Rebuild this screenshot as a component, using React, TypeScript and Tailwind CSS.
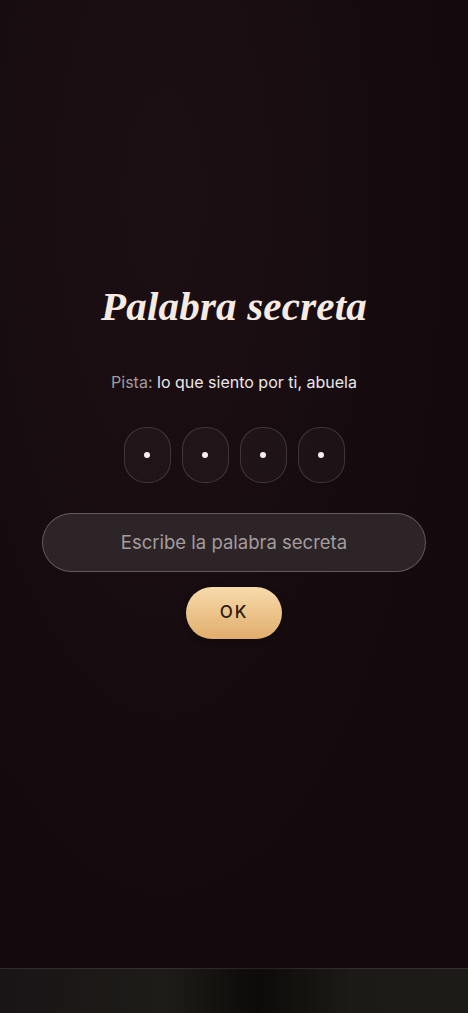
import React from 'react';

const PinBox: React.FC = () => (
  <div className="w-[47px] h-[56px] rounded-[22px] border border-white/15 bg-white/[0.03] flex items-center justify-center">
    <span className="w-[6px] h-[6px] rounded-full bg-[#f4eef0]" />
  </div>
);

export default function App() {
  return (
    <div className="w-[468px] h-[1013px] flex flex-col bg-[#140a0e] font-['Inter','Noto_Sans',sans-serif] overflow-hidden">
      <div className="flex-1 flex flex-col items-center bg-[radial-gradient(ellipse_at_35%_20%,#1c0f14_0%,#150b0f_55%,#120a0d_100%)]">
        <h1 className="mt-[280px] text-[41px] leading-[52px] italic font-bold text-[#f6ebe2] font-['Liberation_Serif','DejaVu_Serif',serif] tracking-[0.2px]">
          Palabra secreta
        </h1>

        <p className="mt-[39px] text-[16px] leading-[22px] text-[#ece6e8]">
          <span className="text-[#a39a9e]">Pista:</span> lo que siento por ti, abuela
        </p>

        <div className="mt-[34px] flex gap-[11px]">
          <PinBox />
          <PinBox />
          <PinBox />
          <PinBox />
        </div>

        <div className="mt-[30px] w-[384px] h-[59px] rounded-full border border-white/25 bg-[#2c2427] flex items-center justify-center">
          <span className="text-[18.5px] text-[#a49c9f]">Escribe la palabra secreta</span>
        </div>

        <button className="mt-[15px] w-[96px] h-[52px] rounded-full bg-gradient-to-b from-[#f7dbab] to-[#e0ad6c] text-[#2a1a12] text-[17px] font-medium tracking-[2px] flex items-center justify-center shadow-[0_2px_6px_rgba(0,0,0,0.3)]">
          OK
        </button>
      </div>

      <div className="h-[45px] border-t border-white/10 bg-[linear-gradient(90deg,#1a1416_0%,#1d1c18_35%,#0d0b09_55%,#1b1a16_75%,#1c1b18_100%)]" />
    </div>
  );
}
